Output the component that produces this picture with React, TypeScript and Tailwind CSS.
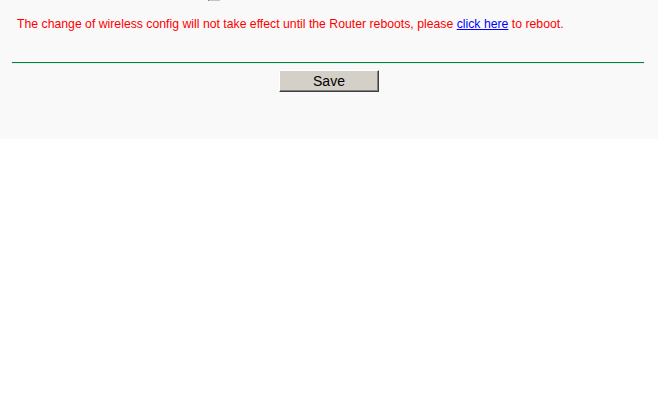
export default function App() {
  return (
    <div className="w-[658px] h-[400px] bg-white" style={{ fontFamily: '"Liberation Sans", Arial, sans-serif' }}>
      <div className="relative h-[139px] bg-[#f9f9f9]">
        <div className="absolute left-[208px] top-0 w-[12px] h-[1px] bg-[#c8c4bc] border-l border-[#808080]" />
        <div className="pt-[16px] pl-[17px] text-[12.25px] leading-[16px] text-[#ff0000]">
          The change of wireless config will not take effect until the Router reboots, please{' '}
          <a href="#" className="text-[#0000ff] underline">click here</a> to reboot.
        </div>
        <div className="ml-[12px] mr-[14px] mt-[30px] h-[2px] border-t border-[#008040] bg-[#e8f0ea]" />
        <div className="flex justify-center pt-[6px]">
          <button className="w-[100px] h-[22px] bg-[#d4d0c8] text-[14px] leading-none text-black border border-t-[#ffffff] border-l-[#ffffff] border-r-[#404040] border-b-[#404040] shadow-[inset_-1px_-1px_0_#808080]">
            Save
          </button>
        </div>
      </div>
    </div>
  );
}
